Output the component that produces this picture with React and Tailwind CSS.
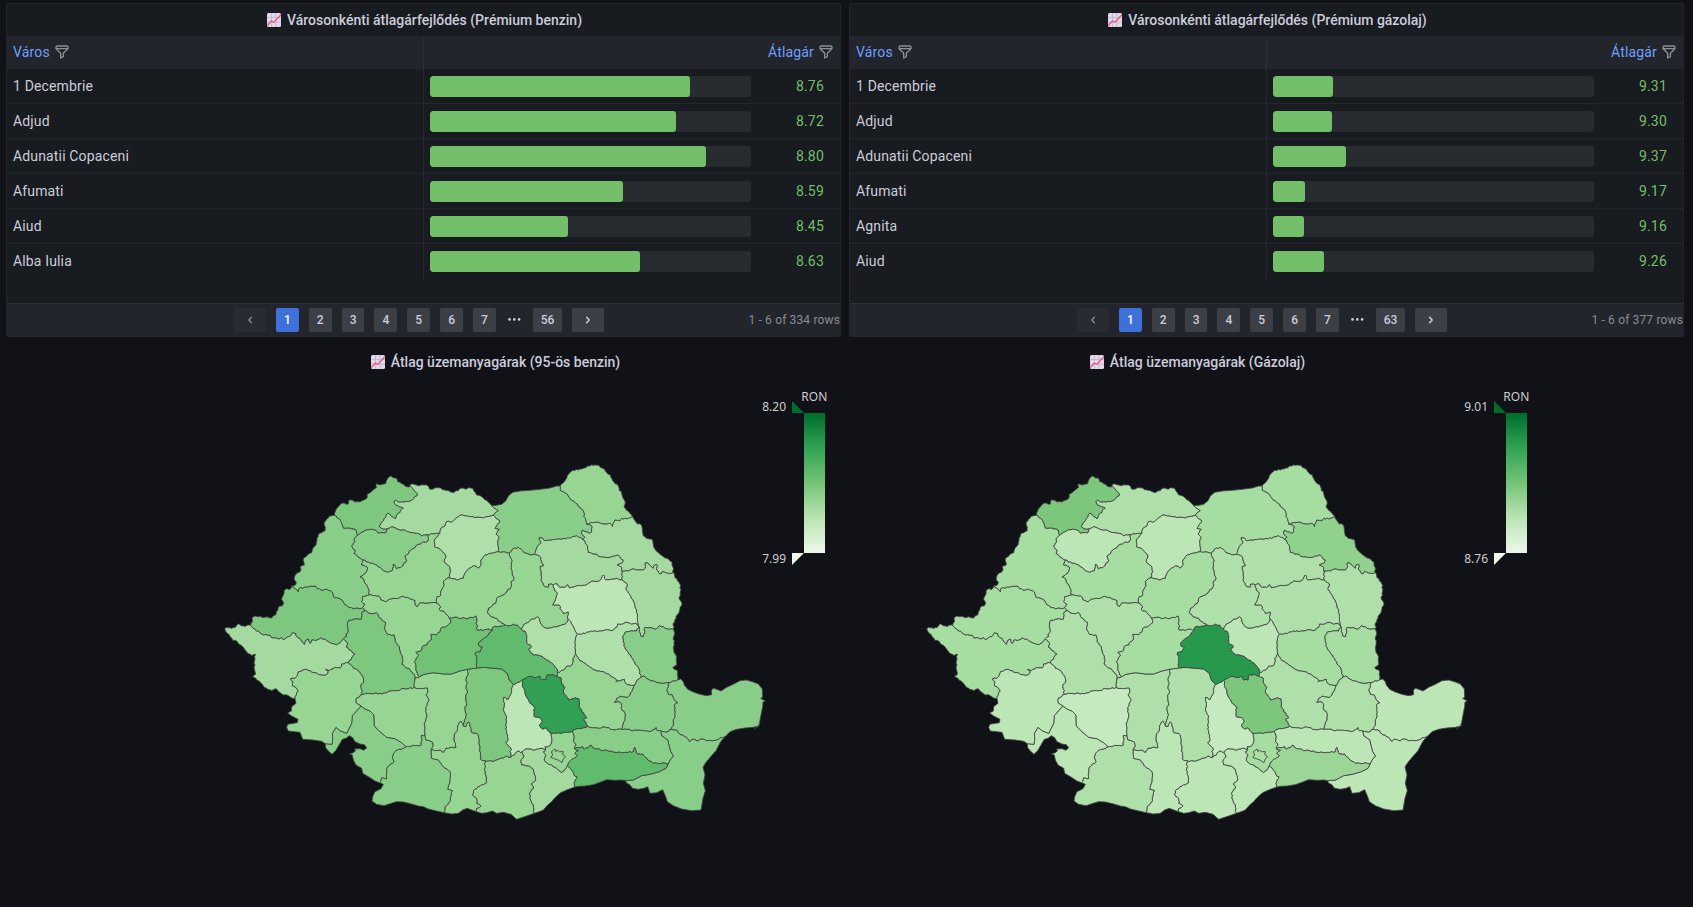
import React from "react";

const premiumPetrol = [
  { city: "1 Decembrie", price: "8.76", width: 260 },
  { city: "Adjud", price: "8.72", width: 246 },
  { city: "Adunatii Copaceni", price: "8.80", width: 276 },
  { city: "Afumati", price: "8.59", width: 193 },
  { city: "Aiud", price: "8.45", width: 138 },
  { city: "Alba Iulia", price: "8.63", width: 210 },
];

const premiumDiesel = [
  { city: "1 Decembrie", price: "9.31", width: 60 },
  { city: "Adjud", price: "9.30", width: 59 },
  { city: "Adunatii Copaceni", price: "9.37", width: 73 },
  { city: "Afumati", price: "9.17", width: 32 },
  { city: "Agnita", price: "9.16", width: 31 },
  { city: "Aiud", price: "9.26", width: 51 },
];

// Border segments. A key names the counties on either side; a single code is the national border.
const BORDERS = {
  TM: "225,746 214,743 205,737 185,732 172,719 167,716 155,722 135,713 117,693 108,685 98,679 107,672 104,660 102,652 105,645 102,638 104,632 103,620 107,613 95,617 87,612 78,602 70,592 64,586 56,582 46,571 38,571 32,562 26,552 18,545 14,537 19,532 34,535 46,532 55,521 66,528 75,530 85,525 92,525",
  AR: "92,525 97,516 96,505 106,498 120,499 132,503 145,502 155,504 161,497 168,494 170,484 176,470 187,468 191,458 185,448 190,436 192,422 203,416 208,419 215,408",
  BH: "215,408 227,404 229,396 223,390 228,372 242,362 240,350 253,345 250,325 262,315 275,308 279,295 288,285 291,265 299,249 315,243 316,232 312,218 320,207 332,198 343,196",
  SM: "343,196 347,182 356,169 367,159 379,163 385,162 387,150 395,150 403,155 420,156 432,150 442,141 441,133 457,122 470,112 469,101 481,105 497,101 502,87 512,78 520,84 527,84 533,95 545,101 556,109 568,111 570,107",
  MM: "570,107 573,102 585,104 598,107 612,105 625,108 628,117 640,117 650,113 662,114 675,120 695,127 715,122 722,115 735,117 745,113 758,115 765,127 770,135 785,140 795,150 803,155 815,167",
  SV: "815,167 830,166 845,163 858,152 865,138 878,127 900,123 930,121 960,118 990,114 1010,108 1020,108",
  BT: "1020,108 1028,100 1040,85 1050,68 1058,61 1075,60 1090,55 1103,48 1120,46 1137,46 1143,53 1155,60 1160,68 1172,75 1175,85 1182,97 1195,108 1198,122 1205,128 1208,142 1216,158 1212,170 1222,182 1232,193 1238,200",
  IS: "1238,200 1245,212 1252,222 1264,224 1267,238 1268,248 1270,258 1285,266 1296,268 1300,285 1306,300 1320,313 1340,325 1356,336 1359,352 1360,368",
  VS: "1360,368 1364,378 1372,392 1382,407 1380,430 1378,448 1386,460 1380,472 1376,490 1368,500 1364,515 1360,520 1362,530 1360,537",
  GL: "1360,537 1363,545 1361,560 1362,580 1360,595 1364,610 1369,618 1370,640 1370,645 1358,653 1370,660 1372,672 1374,685 1372,690",
  TL: "1372,690 1382,687 1390,695 1393,705 1403,718 1420,726 1440,733 1460,737 1475,734 1474,722 1479,715 1488,717 1503,723 1520,712 1540,703 1560,692 1580,690 1600,696 1615,702 1627,717 1628,742 1622,745 1636,753 1629,756 1628,770 1622,800 1617,828 1600,832 1575,834 1550,838 1530,845 1515,860",
  CT: "1515,860 1502,875 1488,902 1472,920 1458,937 1449,951 1455,975 1450,1000 1456,1022 1449,1045 1443,1080 1415,1082 1385,1077 1360,1067 1342,1055 1337,1040 1328,1019 1310,1028 1290,1030 1283,1010 1272,1015 1255,1018 1238,1015 1228,1003 1220,1000 1217,992",
  CL: "1217,992 1205,990 1185,991 1160,989 1140,997 1120,1004 1095,1008 1075,1009 1062,1012",
  GR: "1062,1012 1040,1020 1022,1028 1005,1043 995,1055 983,1065 970,1080 955,1086 943,1090",
  TR: "943,1090 920,1098 890,1108 873,1093 850,1087 830,1090 817,1083 800,1088 785,1090 770,1085",
  OT: "770,1085 755,1080 742,1075 728,1080 715,1090 695,1092 673,1088",
  DJ: "673,1088 650,1083 625,1077 610,1070 595,1068 575,1062 550,1056 530,1055 510,1061 492,1067 470,1063 456,1053 458,1040 465,1025 483,1016 490,1003 480,998 478,998",
  MH: "478,998 465,993 450,983 428,970 425,955 408,945 400,930 397,915 388,912 400,908 407,902 403,897 420,896 432,901 440,893 433,884 420,882 405,875 398,863 388,857 378,865 367,868 357,885 347,902 336,913 325,903 317,893 316,881",
  CS: "316,881 305,874 280,870 248,868 240,847 205,843 200,833 203,823 232,818 234,808 215,798 203,789 214,783 215,770 228,760 225,746",
  "TM-AR": "92,525 105,537 125,552 150,555 155,563 180,566 183,562 190,568 205,560 213,555 218,547 227,550 230,560 243,570 253,583 258,570 266,567 270,580 275,570 290,570 303,563 330,577 350,584 365,572 370,566",
  "AR-HD": "370,566 380,560 378,552 385,545 382,530 385,512 400,508 424,508 425,490 435,482",
  "AR-AB": "435,482 428,473",
  "AR-BH": "215,408 228,418 235,425 237,415 260,411 288,409 292,416 310,420 320,417 337,426 343,443 363,448 375,464 390,473 405,475 428,473",
  "HD-TM": "370,566 384,580 380,592 388,600 405,612 396,622 385,638",
  "TM-CS": "225,746 229,735 235,723 230,715 218,708 219,695 212,686 228,682 236,665 255,658 270,662 283,668 305,675 317,675 325,665 317,658 328,662 343,652 360,655 365,642 385,638",
  "CS-HD": "385,638 400,655 415,662 425,675 431,690 422,710 427,733",
  "CS-GJ": "427,733 408,745 408,758 423,768",
  "CS-MH": "423,768 410,782 397,797 395,820 380,850 360,842 348,832 337,850 338,868 336,883 316,881",
  "MH-GJ": "423,768 435,777 450,783 462,795 463,828 480,845 500,862 525,866 545,878 558,890",
  "MH-DJ": "558,890 545,897 525,905 517,922 522,935 508,947 500,955 500,985 485,983 478,998",
  "HD-AB": "435,482 450,490 470,488 478,503 487,512 497,518 493,535 502,553 522,555 525,575 538,590 542,610 549,630 546,643 570,660 583,675 584,687",
  "AB-VL": "584,687 598,680",
  "HD-VL": "584,687 583,712",
  "HD-GJ": "427,733 450,730 480,730 500,728 515,722 540,721 545,715 565,716 583,712",
  "VL-GJ": "583,712 605,716 622,714 624,722 618,735 627,752 617,772 621,795 613,820 615,856",
  "GJ-DJ": "558,890 580,886 604,885 604,856 615,856",
  "DJ-VL": "615,856 618,870 637,876 640,888 633,900",
  "VL-OT": "633,900 660,900 670,908 678,894 708,892 702,870 703,852 712,843 712,828 723,813 730,828",
  "OT-DJ": "633,900 634,925 655,930 665,945 690,965 690,985 686,1005 683,1018 697,1022 692,1040 690,1055 675,1070 673,1088",
  "VL-AG": "730,828 737,805 740,795 735,775 740,760 737,740 742,730 738,715 742,700 738,688 745,672 742,658",
  "SB-VL": "598,680 612,673 640,668 670,672 695,672 720,663 742,658",
  "SB-AG": "742,658 770,654",
  "AB-SB": "598,680 590,665 583,635 595,617 587,607 605,600 608,588 620,585 625,575 633,570 632,553 650,554 660,545 662,535 680,528 683,525 692,518 688,505",
  "SB-MS": "688,505 700,503 725,505 760,503 768,498 770,515 771,540 790,542 805,537 817,540",
  "SB-BV": "817,540 800,560 780,575 775,585 787,592 780,605 766,608 770,625 770,654",
  "MS-BV": "817,540 820,530 840,528 855,525",
  "HR-BV": "855,525 870,527 880,522 893,525 905,538",
  "CV-BV": "905,538 918,548 921,560 920,578 935,590 925,598 940,615 960,617 980,630 995,638 1010,655 1013,668",
  "HR-CV": "905,538 912,523 930,512 948,503 953,500 960,515 972,532 990,533 1020,527 1038,520 1044,508",
  "CV-BC": "1044,508 1052,515 1060,530 1072,553",
  "CV-VN": "1072,553 1064,575 1067,612",
  "CV-BZ": "1067,612 1058,625 1056,645 1040,648 1030,660 1013,668",
  "BV-BZ": "1013,668 1010,678",
  "BV-PH": "1010,678 995,673 980,677 978,690 965,690 960,678 945,683 930,679 915,685 905,690",
  "BV-DB": "905,690 893,697 880,703",
  "BV-AG": "770,654 790,652 845,657 862,670 868,690 880,703",
  "AG-DB": "880,703 871,735 865,748 850,743 854,760 851,782 860,798 857,825 860,850 865,868 857,878 872,893 872,922",
  "AG-TR": "796,932 815,933 840,925 860,918 872,922",
  "AG-OT": "730,828 738,830 745,815 750,828 753,845 775,855 778,885 781,915 784,930 796,932",
  "OT-TR": "796,932 793,960 797,975 800,998 780,1008 760,1022 757,1035 770,1045 770,1060 783,1068 770,1075 770,1085",
  "TR-DB": "872,922 883,915 893,903 902,908 905,905",
  "TR-GR": "905,905 912,918 902,935 905,945 925,948 940,958 942,970 947,990 935,1000 940,1015 928,1030 932,1050 940,1070 943,1090",
  "DB-GR": "905,905 915,897 945,900 960,895 977,897",
  "DB-IF": "977,897 975,890 988,888 995,875 993,850",
  "DB-PH": "905,690 908,710 915,722 917,735 928,755 943,770 943,785 943,800 960,803 967,815 958,825 965,835 980,835 990,848 993,850",
  "PH-IF": "993,850 1020,850 1035,848 1057,845",
  "PH-IL": "1057,845 1065,838 1085,835 1103,828",
  "PH-BZ": "1010,678 1022,683 1025,700 1035,713 1030,725 1040,740 1045,750 1062,745 1077,747 1077,770 1085,780 1092,795 1100,803 1090,808 1103,828",
  "IF-IL": "1057,845 1062,860 1060,875 1068,885 1063,897",
  "IF-CL": "1063,897 1075,901 1064,911 1072,917 1060,926 1048,935 1042,948",
  "IF-GR": "977,897 970,905 978,915 972,930 985,943 995,945 1010,955 1025,968 1035,960 1042,948",
  "GR-CL": "1042,948 1050,955 1058,965 1062,975 1070,980 1064,995 1062,1012",
  "IL-CL": "1063,897 1075,893 1088,890 1093,898 1105,893 1113,885 1122,895 1150,902 1162,902 1185,907 1210,908 1235,907 1240,905 1244,892 1248,902 1252,912 1268,912 1280,925 1300,940 1325,940 1345,941",
  "IL-BZ": "1103,828 1110,833 1160,833 1185,840 1195,837 1205,838",
  "IL-BR": "1205,838 1220,838 1240,842 1270,842 1290,845 1308,833 1313,843 1322,843",
  "IL-CT": "1322,843 1325,857 1343,870 1348,890 1352,905 1360,918 1350,930 1345,941",
  "BR-CT": "1322,843 1340,846 1353,838",
  "CL-CT": "1345,941 1338,955 1318,965 1290,973 1265,977 1240,990 1217,992",
  "TL-CT": "1353,838 1372,842 1383,855 1400,862 1410,875 1415,868 1430,872 1440,868 1465,872 1490,870 1500,863 1515,860",
  "BR-TL": "1353,838 1360,820 1363,805 1365,775 1363,765 1373,758 1362,748 1357,735 1345,733 1340,720 1345,710 1347,698",
  "GL-TL": "1347,698 1358,693 1372,690",
  "GL-BR": "1263,682 1270,678 1285,688 1300,693 1310,697 1330,700 1347,698",
  "BR-VN": "1263,682 1250,692 1242,706",
  "BR-BZ": "1242,706 1237,720 1230,735 1222,742 1208,740 1200,738 1190,745 1183,757 1200,757 1205,765 1203,775 1215,790 1215,810 1207,830 1205,838",
  "BZ-VN": "1067,612 1080,632 1100,645 1125,660 1165,672 1175,680 1192,692 1187,695 1200,693 1213,688 1217,700 1230,705 1242,706",
  "VN-GL": "1263,682 1258,660 1240,632 1225,608 1215,592 1210,570 1208,558 1215,547 1240,543 1250,543 1256,529",
  "BC-VN": "1072,553 1085,553 1100,547 1115,543 1130,545 1155,540 1175,542 1190,532 1193,522 1205,523 1222,517 1235,523 1248,520 1256,529",
  "VS-GL": "1256,529 1258,545 1262,558 1270,560 1273,550 1275,532 1295,533 1308,538 1318,527 1335,535 1360,537",
  "NT-VS": "1206,363 1207,390",
  "BC-VS": "1207,390 1222,402 1217,415 1230,435 1240,455 1250,480 1252,500 1256,529",
  "VS-IS": "1206,363 1225,363 1238,357 1250,360 1270,360 1277,350 1275,340 1282,338 1300,355 1303,345 1310,343 1310,360 1320,372 1327,365 1345,370 1360,368",
  "NT-BC": "1000,405 1012,402 1020,412 1033,412 1042,404 1048,414 1070,408 1100,405 1115,393 1130,395 1143,388 1150,375 1157,390 1172,388 1190,385 1207,390",
  "NT-IS": "1087,268 1095,275 1103,292 1105,307 1125,312 1140,320 1165,322 1185,318 1195,315 1202,325 1210,330 1205,340 1192,345 1205,352 1206,363",
  "SV-IS": "1100,222 1117,230 1115,245 1107,250 1088,240 1085,252 1095,262 1087,268",
  "SV-BT": "1020,108 1020,120 1035,128 1050,145 1068,160 1080,172 1092,187 1092,200 1098,212 1100,222",
  "BT-IS": "1100,222 1115,218 1135,217 1155,222 1170,220 1178,230 1185,210 1200,213 1205,205 1220,207 1238,200",
  "SV-NT": "942,313 950,295 962,280 958,263 978,272 1010,268 1038,267 1070,257 1087,268",
  "HR-NT": "942,313 962,322 970,347 960,350 963,375 965,395 975,410 984,412 985,403 1000,405",
  "HR-BC": "1000,405 1002,420 1012,430 1008,442 998,465 1017,465 1023,480 1030,490 1045,487 1042,500 1044,508",
  "HR-SV": "868,310 875,303 878,297 895,292 903,297 912,308 930,315 942,313",
  "SV-MS": "868,310 855,306 835,305",
  "MS-HR": "868,310 876,335 873,350 877,375 882,385 873,400 873,410 855,430 830,445 826,460 805,475 803,490 815,502 830,505 845,520 855,525",
  "SV-BN": "820,196 828,205 840,215 825,235 838,238 828,252 838,262 833,275 835,305",
  "SV-MM": "815,167 820,172 835,182 820,196",
  "MM-BN": "820,196 800,200 790,204 765,203 740,198 720,196 705,208 697,215 680,215 675,228 663,235 660,250",
  "MM-CJ": "660,250 640,252 622,254",
  "BN-CJ": "660,250 648,263 643,270 643,290 660,297 667,305 678,318 673,335 688,348 692,365 687,383",
  "BN-MS": "687,383 710,390 730,385 735,370 748,355 760,347 775,355 783,345 782,335 795,315 810,310 835,305",
  "CJ-MS": "687,383 670,395 672,408 662,425 663,435 652,440 650,458 655,462",
  "MS-AB": "655,462 662,470 657,478 675,488 680,495 688,505",
  "CJ-AB": "448,435 475,438 483,450 495,455 515,447 535,445 548,439 565,443 585,452 585,465 592,470 600,458 615,460 635,458 655,462",
  "BH-AB": "448,435 428,440 425,455 435,462 428,473",
  "BH-CJ": "430,330 425,345 443,352 437,370 420,380 432,388 435,400 445,415 448,435",
  "SJ-CJ": "430,330 450,340 470,345 485,357 503,367 517,362 520,343 530,357 545,350 560,332 555,318 565,312 572,300 585,293 595,283 610,276 622,275 625,262 622,254",
  "SJ-BH": "430,330 415,322 402,310 405,300 395,288 405,275 403,265 413,255",
  "BH-SM": "343,196 355,205 363,215 370,234 390,234 408,240 413,255",
  "SM-SJ": "413,255 430,245 450,238 465,240 475,250 497,249 502,236",
  "SM-MM": "570,107 580,118 593,132 582,145 570,153 540,157 527,150 522,155 525,163 550,175 535,190 525,207 515,200 503,190 493,205 490,213 482,222 478,230 485,235 502,236",
  "MM-SJ": "502,236 515,230 530,236 550,240 570,248 590,250 605,258 622,254",
};

const CAPITAL =
  "1005,897 1008,905 1012,900 1018,905 1030,905 1028,914 1037,920 1030,926 1026,938 1014,930 1003,926 992,922 998,915 994,905";

const COUNTIES = [
  "TM", "AR", "BH", "SM", "MM", "SJ", "CJ", "BN", "SV", "BT", "NT", "IS", "VS", "BC",
  "VN", "GL", "TL", "CT", "BR", "BZ", "IL", "CL", "IF", "GR", "TR", "OT", "DJ", "MH",
  "GJ", "VL", "AG", "DB", "PH", "BV", "CV", "HR", "MS", "SB", "AB", "HD", "CS",
];

// River, coast and ridge lines that stay smooth.
const SMOOTH = [
  "TL", "CT", "CL", "GR", "TR", "OT", "DJ", "MH", "CS", "SV", "SB-VL", "SB-AG", "BV-AG",
  "CL-CT", "IL-CT", "CS-MH", "MH-GJ",
];

const distance = (a, b) => Math.hypot(a[0] - b[0], a[1] - b[1]);

// Breaks each straight run into short steps with a small repeatable sideways offset.
function roughen(points) {
  const result = [points[0]];
  for (let i = 1; i < points.length; i += 1) {
    const [x0, y0] = points[i - 1];
    const [x1, y1] = points[i];
    const length = distance(points[i - 1], points[i]);
    const steps = Math.max(1, Math.round(length / 6));
    for (let s = 1; s < steps; s += 1) {
      const t = s / steps;
      const x = x0 + (x1 - x0) * t;
      const y = y0 + (y1 - y0) * t;
      const noise = Math.sin(x * 12.9898 + y * 78.233) * 43758.5453;
      const offset = (noise - Math.floor(noise) - 0.5) * 4.4;
      result.push([
        Math.round((x - ((y1 - y0) / length) * offset) * 10) / 10,
        Math.round((y + ((x1 - x0) / length) * offset) * 10) / 10,
      ]);
    }
    result.push(points[i]);
  }
  return result;
}

const SEGMENTS = Object.entries(BORDERS).map(([key, text]) => {
  const points = text.split(" ").map((pair) => pair.split(",").map(Number));
  return { sides: key.split("-"), points: SMOOTH.includes(key) ? points : roughen(points) };
});

// Joins every segment that touches a county into one closed ring.
function ringOf(code) {
  const parts = SEGMENTS.filter(({ sides }) => sides.includes(code)).map(({ points }) => points.slice());
  let ring = parts.shift();
  while (parts.length) {
    const end = ring[ring.length - 1];
    let best = { gap: Infinity };
    parts.forEach((part, index) => {
      const head = distance(end, part[0]);
      const tail = distance(end, part[part.length - 1]);
      if (head < best.gap) best = { gap: head, index, flip: false };
      if (tail < best.gap) best = { gap: tail, index, flip: true };
    });
    const [next] = parts.splice(best.index, 1);
    if (best.flip) next.reverse();
    ring = ring.concat(next.slice(1));
  }
  return ring.map((point) => point.join(",")).join(" ");
}

const RINGS = COUNTIES.map((code) => [code, ringOf(code)]).concat([["B", CAPITAL]]);

const petrolColors = {
  base: "#96d592",
  SM: "#7dc87e", BH: "#89ce88", AR: "#7dc87e", TM: "#a4da9f", SJ: "#89ce88", MM: "#a4da9f",
  HD: "#7dc87e", BN: "#b0e0aa", SV: "#89ce88", NT: "#a4da9f", IS: "#a4da9f", VS: "#a4da9f",
  BC: "#bce6b5", CV: "#b0e0aa", VN: "#b0e0aa", GL: "#89ce88", TL: "#89ce88", CT: "#89ce88",
  BR: "#89ce88", IL: "#89ce88", CL: "#60bb6d", GR: "#a4da9f", DJ: "#89ce88", MH: "#89ce88",
  AG: "#7dc87e", DB: "#bce6b5", PH: "#31a054", BV: "#60bb6d", SB: "#70c275",
};

const dieselColors = {
  base: "#b0e0aa",
  SM: "#7dc77d", BH: "#a6dda1", SJ: "#bce6b5", CJ: "#a6dda1", BN: "#bce6b5", SV: "#a6dda1",
  BT: "#a6dda1", IS: "#90d28d", MS: "#a6dda1", CV: "#bce6b5", VN: "#a6dda1", GL: "#a6dda1",
  TL: "#bce6b5", CT: "#bce6b5", IL: "#bce6b5", CL: "#9bd697", IF: "#a6dda1", GR: "#bce6b5",
  TR: "#bce6b5", OT: "#bce6b5", MH: "#bce6b5", GJ: "#c5eabf", DB: "#c5eabf", PH: "#7dc77d",
  BV: "#28994c", SB: "#a6dda1", AR: "#a6dda1", TM: "#a6dda1", CS: "#bce6b5",
};

function ChartEmoji() {
  return (
    <svg className="h-3.5 w-3.5 shrink-0" viewBox="0 0 14 14">
      <rect width="14" height="14" rx="1.5" fill="#e2d8ec" />
      <path d="M4.5 0V14M9 0V14M0 4.6H14M0 9.2H14" stroke="#beb2ca" strokeWidth="0.8" fill="none" />
      <path d="M0.3 12.6L4.4 8L6.8 9.4L13.7 1.9" stroke="#f8416b" strokeWidth="1.1" fill="none" />
    </svg>
  );
}

function FilterIcon() {
  return (
    <svg className="h-4 w-4 shrink-0" viewBox="0 0 24 24" fill="#8e8f98">
      <path d="M19,2H5A3,3,0,0,0,2,5V6.17a3,3,0,0,0,.25,1.2l0,.06a2.81,2.81,0,0,0,.59.86L9,14.41V21a1,1,0,0,0,.47.85A1,1,0,0,0,10,22a1,1,0,0,0,.45-.11l4-2A1,1,0,0,0,15,19V14.41l6.12-6.12a2.81,2.81,0,0,0,.59-.86l0-.06A3,3,0,0,0,22,6.17V5A3,3,0,0,0,19,2ZM13.29,13.29A1,1,0,0,0,13,14v4.38l-2,1V14a1,1,0,0,0-.29-.71L5.41,8H18.59ZM20,6H4V5A1,1,0,0,1,5,4H19a1,1,0,0,1,1,1Z" />
    </svg>
  );
}

function PanelTitle({ children }) {
  return (
    <h2 className="flex h-8 items-center justify-center gap-[6px] text-sm font-medium text-[#ccccdc]">
      <ChartEmoji />
      <span>{children}</span>
    </h2>
  );
}

function PageButton({ active, children }) {
  return (
    <button
      className={
        active
          ? "h-6 rounded-[2px] bg-[#3d71d9] px-2 text-xs font-medium text-white"
          : "h-6 rounded-[2px] bg-[#3d3f47] px-2 text-xs font-medium text-[#ccccdc]"
      }
    >
      {children}
    </button>
  );
}

function Chevron({ back }) {
  return (
    <svg className="h-4 w-4" viewBox="0 0 16 16" fill="none" stroke={back ? "#85868d" : "#d0d0dd"} strokeWidth="1.5" strokeLinecap="round" strokeLinejoin="round">
      <path d={back ? "M9.4 5.3L6.8 8L9.4 10.7" : "M6.6 5.3L9.2 8L6.6 10.7"} />
    </svg>
  );
}

function TablePanel({ title, rows, lastPage, total }) {
  return (
    <section className="flex h-[334px] w-[835px] flex-col rounded-[2px] border border-[#23252b] bg-[#181b1f]">
      <div className="pl-[2px]">
        <PanelTitle>{title}</PanelTitle>
      </div>
      <div className="flex h-[33px] bg-[#22252b] text-sm tracking-[0.15px] text-[#6e9fff]">
        <div className="flex w-[417px] items-center gap-1 border-r border-[#2c2f35] pb-px pl-[6px]">
          <span>Város</span>
          <FilterIcon />
        </div>
        <div className="flex flex-1 items-center justify-end gap-1 pb-px pr-[6px]">
          <span>Átlagár</span>
          <FilterIcon />
        </div>
      </div>
      <div className="flex-1">
        {rows.map((row, index) => (
          <div
            key={row.city}
            className={
              index < rows.length - 1
                ? "flex h-[35px] border-b border-[#25272d] text-sm tracking-[0.15px] text-[#ccccdc]"
                : "flex h-[35px] text-sm tracking-[0.15px] text-[#ccccdc]"
            }
          >
            <div
              className={
                index < rows.length - 1
                  ? "flex w-[417px] items-center border-r border-[#25272d] pl-[6px]"
                  : "flex w-[417px] items-center border-r border-[#25272d] pb-px pl-[6px]"
              }
            >
              {row.city}
            </div>
            <div className="flex flex-1 items-start pl-[6px] pt-[7px]">
              <div className="h-[21px] w-[321px] overflow-hidden rounded-[3px] bg-[#282b30]">
                <div className="h-full rounded-[3px] bg-[#73bf69]" style={{ width: row.width }} />
              </div>
              <span className="ml-[45px] leading-[21px] text-[#73bf69]">{row.price}</span>
            </div>
          </div>
        ))}
      </div>
      <div className="flex h-[33px] items-center border-t border-[#2e3036] bg-[#22252b] pl-[227px]">
        <div className="flex items-center gap-[10px]">
          <button className="h-6 rounded-[2px] bg-[#292b32] px-2">
            <Chevron back />
          </button>
          <PageButton active>1</PageButton>
          {[2, 3, 4, 5, 6, 7].map((page) => (
            <PageButton key={page}>{page}</PageButton>
          ))}
          <svg className="h-4 w-[17px]" viewBox="0 0 17 16" fill="#d0d0dd">
            <circle cx="3.5" cy="7.4" r="1.3" />
            <circle cx="8.3" cy="7.4" r="1.3" />
            <circle cx="13.1" cy="7.4" r="1.3" />
          </svg>
          <PageButton>{lastPage}</PageButton>
          <button className="h-6 rounded-[2px] bg-[#3d3f47] px-2">
            <Chevron />
          </button>
        </div>
        <span className="ml-auto text-xs tracking-[0.15px] text-[#8a8b93]">1 - 6 of {total} rows</span>
      </div>
    </section>
  );
}

function CountyMap({ colors }) {
  return (
    <svg className="h-[380px] w-[540px] shrink-0 overflow-visible" viewBox="0 0 1620 1140">
      {RINGS.map(([code, points]) => (
        <polygon key={code} points={points} fill={colors[code] || colors.base} stroke="#444444" strokeWidth="2.6" strokeLinejoin="round" />
      ))}
      <path d="M1619 818L1613 830L1602 838" fill="none" stroke="#555a55" strokeWidth="2.5" />
    </svg>
  );
}

function Legend({ id, high, low }) {
  return (
    <svg className="h-[200px] w-[80px] shrink-0 font-['Noto_Sans',sans-serif] text-xs" viewBox="0 -10 80 200" fill="#cccccc">
      <defs>
        <linearGradient id={id} x1="0" y1="0" x2="0" y2="1">
          <stop offset="0" stopColor="#006d2c" />
          <stop offset="0.25" stopColor="#31a354" />
          <stop offset="0.5" stopColor="#74c476" />
          <stop offset="0.75" stopColor="#bae4b3" />
          <stop offset="1" stopColor="#edf8e9" />
        </linearGradient>
      </defs>
      <text x="54.3" y="11" textAnchor="middle">RON</text>
      <text x="26" y="21" textAnchor="end">{high}</text>
      <text x="26" y="173" textAnchor="end">{low}</text>
      <rect x="44" y="23" width="21" height="140" fill={`url(#${id})`} />
      <path d="M32 11V23H44Z" fill="#006d2c" />
      <path d="M32 163H44L32 175Z" fill="#edf8e9" />
    </svg>
  );
}

function MapPanel({ id, title, colors, high, low }) {
  return (
    <section className="w-[694px] pt-px">
      <PanelTitle>{title}</PanelTitle>
      <div className="flex pl-[71.5px] pt-[2px]">
        <div className="pt-[70px]">
          <CountyMap colors={colors} />
        </div>
        <Legend id={id} high={high} low={low} />
      </div>
    </section>
  );
}

export default function App() {
  return (
    <main className="h-[907px] w-[1693px] overflow-hidden bg-[#111217] pt-[3px] font-['Roboto',sans-serif]">
      <div className="flex gap-2 pl-[6px]">
        <TablePanel title="Városonkénti átlagárfejlődés (Prémium benzin)" rows={premiumPetrol} lastPage={56} total={334} />
        <TablePanel title="Városonkénti átlagárfejlődés (Prémium gázolaj)" rows={premiumDiesel} lastPage={63} total={377} />
      </div>
      <div className="mt-2 flex justify-center gap-2">
        <MapPanel id="petrolScale" title="Átlag üzemanyagárak (95-ös benzin)" colors={petrolColors} high="8.20" low="7.99" />
        <MapPanel id="dieselScale" title="Átlag üzemanyagárak (Gázolaj)" colors={dieselColors} high="9.01" low="8.76" />
      </div>
    </main>
  );
}
